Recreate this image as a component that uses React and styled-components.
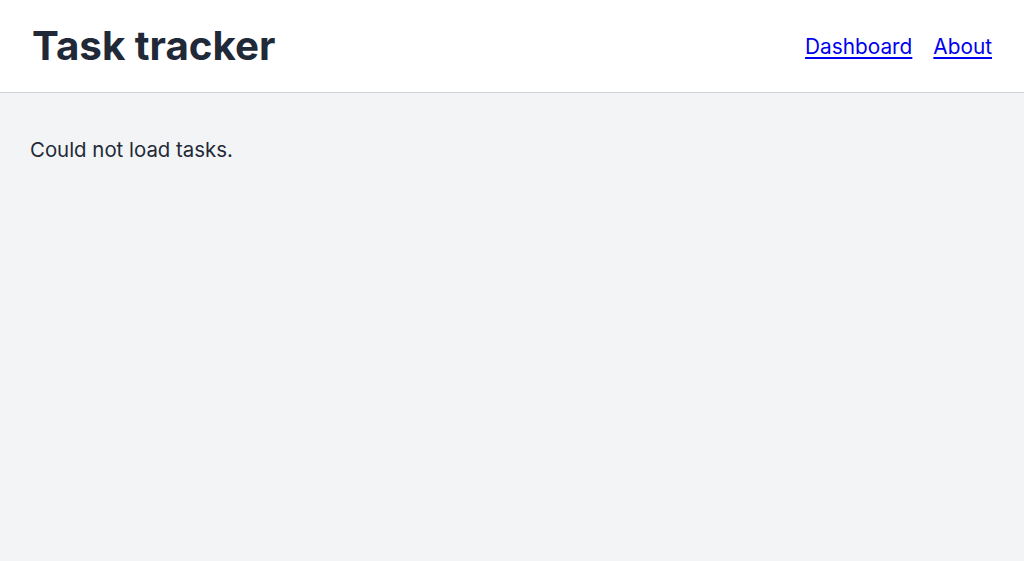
import React from "react";
import styled, { createGlobalStyle } from "styled-components";

const Global = createGlobalStyle`
  html, body { margin: 0; padding: 0; height: 100%; }
  body { background: #f3f4f6; font-family: Inter, "Noto Sans", sans-serif; color: #1f2937; }
  #root { min-height: 100%; }
`;

const Header = styled.header`
  display: flex;
  align-items: center;
  justify-content: space-between;
  background: #ffffff;
  border-bottom: 1px solid #d1d5db;
  padding: 16px 32px;
  height: 60px;
`;

const Title = styled.h1`
  margin: 0;
  font-size: 40.3px;
  font-weight: 700;
  line-height: 60px;
  color: #1f2937;
`;

const Nav = styled.nav`
  display: flex;
  gap: 21px;
`;

const NavLink = styled.a`
  font-size: 20.8px;
  color: #0000ee;
  text-decoration: underline;
  text-underline-offset: 3px;
`;

const Main = styled.main`
  padding: 42px 30px;
`;

const Message = styled.p`
  margin: 0;
  font-size: 20.4px;
  line-height: 30px;
  color: #1f2937;
`;

export default function App() {
  return (
    <>
      <Global />
      <Header>
        <Title>Task tracker</Title>
        <Nav>
          <NavLink href="#">Dashboard</NavLink>
          <NavLink href="#">About</NavLink>
        </Nav>
      </Header>
      <Main>
        <Message>Could not load tasks.</Message>
      </Main>
    </>
  );
}
